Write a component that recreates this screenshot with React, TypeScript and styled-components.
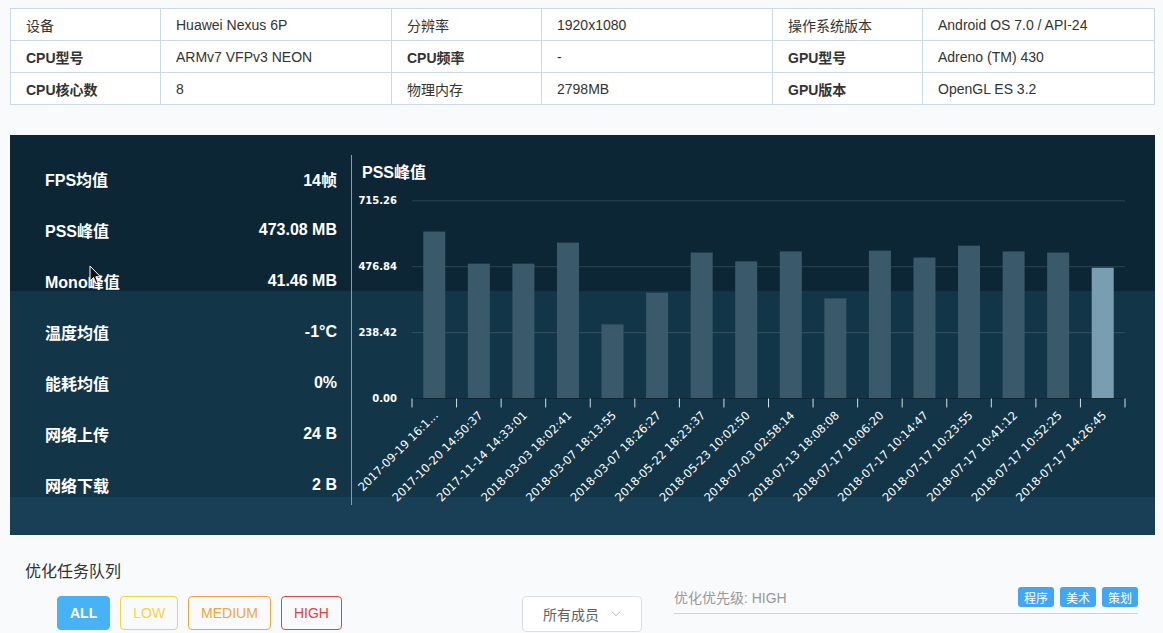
import * as React from 'react';
import styled, { createGlobalStyle } from 'styled-components';
import { ChevronDown } from 'lucide-react';

const Global = createGlobalStyle`
  html, body {
    margin: 0;
    padding: 0;
    overflow: hidden;
    background: #f8fafc;
  }
  body {
    font-family: "Liberation Sans", "Noto Sans CJK SC", sans-serif;
    color: #333;
  }
  * {
    box-sizing: border-box;
  }
`;

const Page = styled.div`
  padding: 8px 8px 0 10px;
`;

const InfoTable = styled.table`
  width: 100%;
  border-collapse: collapse;
  background: #fff;
  font-size: 14px;
  & td {
    border: 1px solid #c9d8ea;
    height: 32px;
    padding: 0 15px;
    color: #333;
    white-space: nowrap;
  }
`;

const Label = styled.td<{ $strong?: boolean }>`
  font-weight: ${(p) => (p.$strong ? 600 : 400)};
`;

const Panel = styled.section`
  margin-top: 30px;
  height: 400px;
  display: flex;
  position: relative;
  background: linear-gradient(
    to bottom,
    #0c2635 0,
    #0c2635 156px,
    #133548 156px,
    #133548 362px,
    #183f55 362px,
    #183f55 100%
  );
`;

const Stats = styled.div`
  width: 341px;
  padding: 18px 14px 0 35px;
`;

const StatRow = styled.div`
  height: 51px;
  display: flex;
  align-items: center;
  justify-content: space-between;
  color: #fff;
  font-size: 16px;
  font-weight: 700;
`;

const ChartBox = styled.div`
  flex: 1;
  margin-top: 20px;
  height: 350px;
  border-left: 1px solid #8d9ba5;
  display: flex;
  flex-direction: column;
`;

const ChartTitle = styled.h3`
  margin: 0;
  padding: 8px 0 0 10px;
  line-height: 20px;
  font-size: 16px;
  font-weight: 700;
  color: #fff;
`;

const Cursor = styled.svg`
  position: absolute;
  left: 79px;
  top: 130px;
`;

const Tasks = styled.section`
  margin-top: 26px;
  padding-left: 15px;
`;

const TasksTitle = styled.h4`
  margin: 0;
  font-size: 16px;
  line-height: 22px;
  font-weight: 400;
  color: #303133;
`;

const TaskBar = styled.div`
  margin-top: 4px;
  display: flex;
  align-items: flex-start;
`;

const Levels = styled.div`
  margin: 9px 0 0 32px;
  display: flex;
  gap: 10px;
`;

const LevelButton = styled.button<{ $color: string; $active?: boolean }>`
  height: 34px;
  padding: 0 12px;
  border: 1px solid ${(p) => p.$color};
  border-radius: 4px;
  background: ${(p) => (p.$active ? p.$color : 'transparent')};
  color: ${(p) => (p.$active ? '#fff' : p.$color)};
  font-family: inherit;
  font-size: 14px;
  font-weight: ${(p) => (p.$active ? 700 : 400)};
`;

const MemberSelect = styled.div`
  margin: 9px 0 0 180px;
  width: 120px;
  height: 36px;
  padding-left: 20px;
  display: flex;
  align-items: center;
  gap: 10px;
  border: 1px solid #dcdfe6;
  border-radius: 4px;
  background: #fff;
  color: #606266;
  font-size: 14px;
`;

const Priority = styled.div`
  margin-left: 32px;
  width: 464px;
  height: 27px;
  padding-bottom: 6px;
  display: flex;
  align-items: center;
  justify-content: space-between;
  border-bottom: 1px solid #cfd2d6;
  color: #999;
  font-size: 14px;
`;

const Tags = styled.div`
  display: flex;
  gap: 6px;
`;

const Tag = styled.span`
  width: 36px;
  height: 20px;
  display: flex;
  align-items: center;
  justify-content: center;
  border-radius: 3px;
  background: #41a7f5;
  color: #fff;
  font-size: 12px;
`;

const device = [
  [['设备', 'Huawei Nexus 6P'], ['分辨率', '1920x1080'], ['操作系统版本', 'Android OS 7.0 / API-24']],
  [['CPU型号', 'ARMv7 VFPv3 NEON'], ['CPU频率', '-'], ['GPU型号', 'Adreno (TM) 430']],
  [['CPU核心数', '8'], ['物理内存', '2798MB'], ['GPU版本', 'OpenGL ES 3.2']],
];

const stats = [
  ['FPS均值', '14帧'],
  ['PSS峰值', '473.08 MB'],
  ['Mono峰值', '41.46 MB'],
  ['温度均值', '-1°C'],
  ['能耗均值', '0%'],
  ['网络上传', '24 B'],
  ['网络下载', '2 B'],
];

const samples = [
  ['2017-09-19 16:1...', 604],
  ['2017-10-20 14:50:37', 488],
  ['2017-11-14 14:33:01', 488],
  ['2018-03-03 18:02:41', 564],
  ['2018-03-07 18:13:55', 268],
  ['2018-03-07 18:26:27', 383],
  ['2018-05-22 18:23:37', 528],
  ['2018-05-23 10:02:50', 496],
  ['2018-07-03 02:58:14', 532],
  ['2018-07-13 18:08:08', 362],
  ['2018-07-17 10:06:20', 535],
  ['2018-07-17 10:14:47', 510],
  ['2018-07-17 10:23:55', 553],
  ['2018-07-17 10:41:12', 532],
  ['2018-07-17 10:52:25', 528],
  ['2018-07-17 14:26:45', 473.08],
] as const;

const MAX = 715.26;
const LEFT = 60;
const RIGHT = 773;
const BASE = 215.5;
const PLOT_H = 197.7;

function PssChart() {
  const step = (RIGHT - LEFT) / samples.length;
  const font = '"DejaVu Sans", "Noto Sans CJK SC", sans-serif';
  return (
    <svg width="100%" height="322" viewBox="0 0 803 322">
      {[0, 1, 2, 3].map((i) => {
        const y = BASE - (PLOT_H / 3) * i;
        return (
          <g key={i}>
            {i > 0 && (
              <line x1={LEFT} x2={RIGHT} y1={y} y2={y} stroke="rgba(255,255,255,0.14)" />
            )}
            <text
              x={45}
              y={y}
              textAnchor="end"
              dominantBaseline="middle"
              fill="#fff"
              fontSize="10"
              fontWeight="700"
              fontFamily={font}
            >
              {((MAX / 3) * i).toFixed(2)}
            </text>
          </g>
        );
      })}
      {samples.map(([label, value], i) => {
        const cx = LEFT + step * (i + 0.5);
        const h = (value / MAX) * PLOT_H;
        const last = i === samples.length - 1;
        const ax = cx + 2;
        const ay = BASE + 15;
        return (
          <g key={label}>
            <rect
              x={cx - 11}
              y={BASE - h}
              width={22}
              height={h}
              fill={last ? '#7a9eb1' : '#3a5a6b'}
            />
            <text
              x={ax}
              y={ay}
              textAnchor="end"
              dominantBaseline="middle"
              transform={`rotate(-45 ${ax} ${ay})`}
              fill="#fff"
              fontSize="11.5"
              fontFamily={font}
            >
              {label}
            </text>
          </g>
        );
      })}
      <line x1={LEFT} x2={RIGHT} y1={BASE} y2={BASE} stroke="#0d2635" />
      {samples.map((_, i) => (
        <line
          key={i}
          x1={LEFT + step * i}
          x2={LEFT + step * i}
          y1={BASE}
          y2={BASE + 9}
          stroke="#d8dde0"
        />
      ))}
      <line x1={RIGHT} x2={RIGHT} y1={BASE} y2={BASE + 9} stroke="#d8dde0" />
    </svg>
  );
}

export default function App() {
  return (
    <Page>
      <Global />
      <InfoTable>
        <colgroup>
          <col style={{ width: 150 }} />
          <col style={{ width: 231 }} />
          <col style={{ width: 150 }} />
          <col style={{ width: 231 }} />
          <col style={{ width: 150 }} />
          <col />
        </colgroup>
        <tbody>
          {device.map((row, r) => (
            <tr key={r}>
              {row.map(([k, v]) => (
                <React.Fragment key={k}>
                  <Label $strong={/PU/.test(k)}>{k}</Label>
                  <td>{v}</td>
                </React.Fragment>
              ))}
            </tr>
          ))}
        </tbody>
      </InfoTable>

      <Panel>
        <Stats>
          {stats.map(([k, v]) => (
            <StatRow key={k}>
              <span>{k}</span>
              <span>{v}</span>
            </StatRow>
          ))}
        </Stats>
        <ChartBox>
          <ChartTitle>PSS峰值</ChartTitle>
          <PssChart />
        </ChartBox>
        <Cursor width="13" height="21" viewBox="0 0 13 21">
          <path
            d="M1 1 L1 16 L4.5 12.5 L7 18.5 L9.2 17.6 L6.8 11.8 L11.5 11.8 Z"
            fill="#111"
            stroke="#fff"
            strokeWidth="1"
            strokeLinejoin="round"
          />
        </Cursor>
      </Panel>

      <Tasks>
        <TasksTitle>优化任务队列</TasksTitle>
        <TaskBar>
          <Levels>
            <LevelButton $color="#47b2f6" $active>ALL</LevelButton>
            <LevelButton $color="#f8d243">LOW</LevelButton>
            <LevelButton $color="#f2a442">MEDIUM</LevelButton>
            <LevelButton $color="#e4433b">HIGH</LevelButton>
          </Levels>
          <MemberSelect>
            所有成员
            <ChevronDown size={14} color="#a8abb2" strokeWidth={1.5} />
          </MemberSelect>
          <Priority>
            <span>优化优先级: HIGH</span>
            <Tags>
              <Tag>程序</Tag>
              <Tag>美术</Tag>
              <Tag>策划</Tag>
            </Tags>
          </Priority>
        </TaskBar>
      </Tasks>
    </Page>
  );
}
